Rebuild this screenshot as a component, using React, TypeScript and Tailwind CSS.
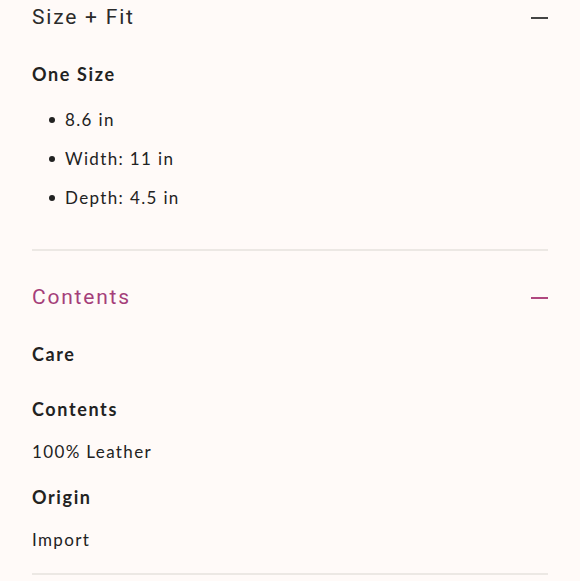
const font = { fontFamily: "Lato, 'Open Sans', sans-serif" };

function Minus({ className }: { className?: string }) {
  return <span className={"block w-[17px] h-[2px] " + className} />;
}

function Header({ title, active }: { title: string; active?: boolean }) {
  return (
    <div className="flex items-center justify-between h-[34px] pt-[2px]">
      <span
        className={
          "text-[21px] tracking-[0.085em] " +
          (active ? "text-[#a53f7a]" : "text-[#2b2b2b]")
        }
        style={{ fontFamily: "Roboto, sans-serif" }}
      >
        {title}
      </span>
      <Minus className={active ? "bg-[#b0477f]" : "bg-[#444]"} />
    </div>
  );
}

const label = "leading-[24px] text-[18px] font-bold tracking-[0.09em]";
const body = "leading-[24px] text-[17px] tracking-[0.08em]";

export default function App() {
  return (
    <div className="min-h-[581px] bg-[#fffaf8] text-[#222]" style={font}>
      <div className="px-8">
        <Header title="Size + Fit" />
        <h4 className={"mt-[28px] " + label}>One Size</h4>
        <ul className={"mt-[22px] flex flex-col gap-[15px] " + body}>
          {["8.6 in", "Width: 11 in", "Depth: 4.5 in"].map((t) => (
            <li key={t} className="flex items-center leading-[24px]">
              <span className="w-[6px] h-[6px] rounded-full bg-[#222] ml-[17px] mr-[10px]" />
              {t}
            </li>
          ))}
        </ul>
        <div className="mt-[39px] h-[2px] bg-[#ece8e4]" />
        <div className="mt-[29px]">
          <Header title="Contents" active />
        </div>
        <h4 className={"mt-[28px] " + label}>Care</h4>
        <h4 className={"mt-[31px] " + label}>Contents</h4>
        <p className={"mt-[19px] " + body}>100% Leather</p>
        <h4 className={"mt-[21px] " + label}>Origin</h4>
        <p className={"mt-[19px] " + body}>Import</p>
        <div className="mt-[21px] h-[2px] bg-[#ece8e4]" />
      </div>
    </div>
  );
}
